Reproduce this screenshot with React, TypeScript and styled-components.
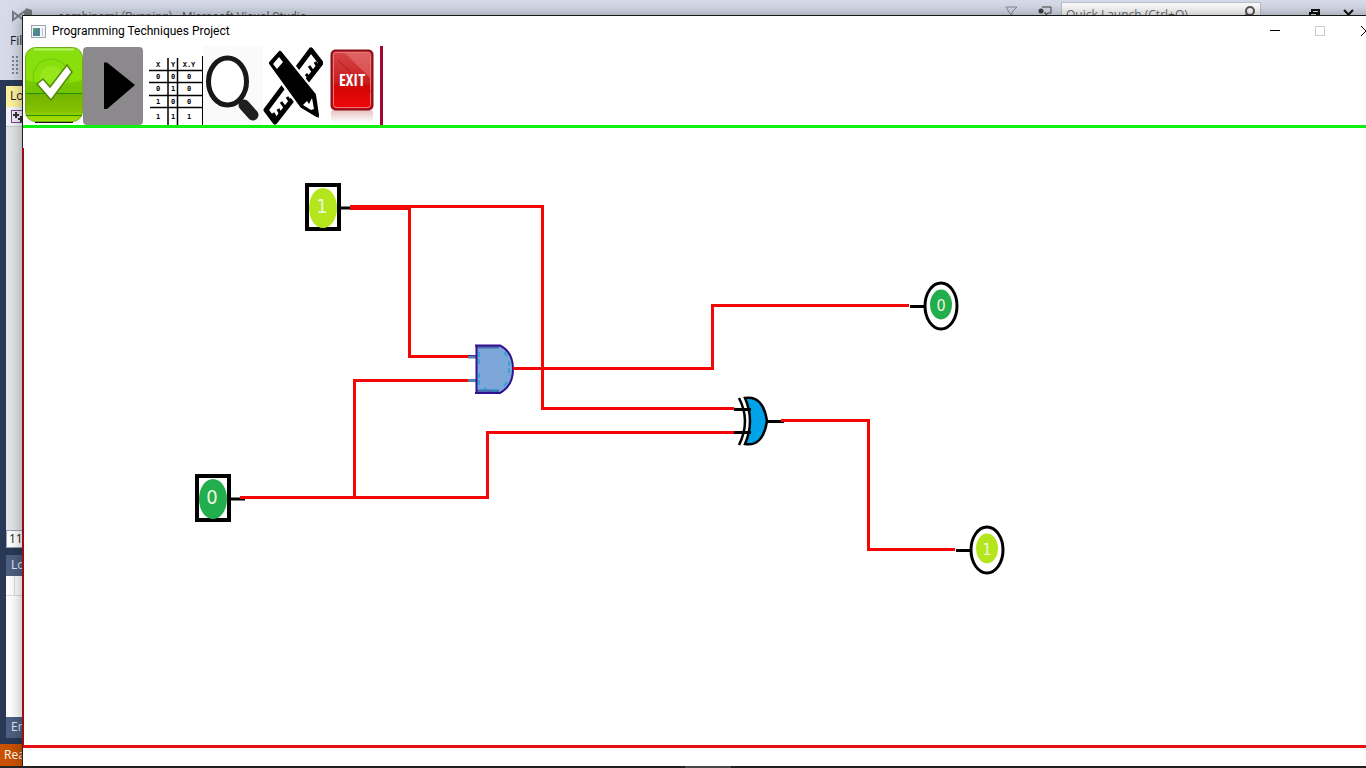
import React from "react";
import styled, { createGlobalStyle } from "styled-components";

const GlobalStyle = createGlobalStyle`
  * { box-sizing: border-box; }
  html, body, #root { height: 100%; }
  body {
    margin: 0;
    overflow: hidden;
    font-family: "Open Sans", "Noto Sans", sans-serif;
    font-size: 12px;
    line-height: 16px;
    color: #1e1e1e;
  }
  button { border: 0; padding: 0; background: none; font: inherit; color: inherit; }
  svg { display: block; }
`;

const Desktop = styled.div`
  position: relative;
  height: 100vh;
  overflow: hidden;
  display: flex;
  flex-direction: column;
  background: #293955;
`;

/* Editor behind the project window */

const IdeHeader = styled.header`
  height: 80px;
  flex: none;
  background: #d6dbe9;
`;

const IdeTitleBar = styled.div`
  height: 32px;
  display: flex;
  align-items: flex-start;
  padding: 0 12px;
`;

const IdeLogo = styled.div`
  width: 46px;
  padding-top: 8px;
`;

const IdeTitle = styled.span`
  flex: 1;
  padding-top: 9px;
  font-family: Roboto, sans-serif;
  color: #66696f;
`;

const IdeTools = styled.div`
  display: flex;
  align-items: flex-start;
`;

const ToolGlyph = styled.div<{ $width: number }>`
  width: ${(p) => p.$width}px;
  padding-top: 6px;
`;

const SearchBox = styled.label`
  display: flex;
  width: 200px;
  height: 24px;
  margin-top: 2px;
  margin-right: 48px;
  padding: 2px 4px;
  background: #fcfcfc;
  border: 1px solid #bcc0cb;
`;

const SearchInput = styled.input`
  flex: 1;
  min-width: 0;
  height: 18px;
  padding: 0;
  border: 0;
  background: none;
  font: inherit;
  &::placeholder { color: #6d6d6d; opacity: 1; }
`;

const IdeMenu = styled.nav`
  display: flex;
  padding: 1px 10px 0;
`;

const IdeGrip = styled.div`
  width: 6px;
  height: 18px;
  margin: 7px 12px;
  background-image: radial-gradient(circle at 1px 1px, #7e8492 1px, transparent 1px);
  background-size: 4px 4px;
`;

const IdeBody = styled.div`
  flex: 1;
  display: flex;
  flex-direction: column;
  padding: 6px 6px 0;
`;

const DocumentTab = styled.div`
  height: 21px;
  padding: 2px 4px;
  background: #fff29d;
`;

const DocumentBar = styled.div`
  height: 20px;
  padding: 3px 5px;
  background: #f3f4f8;
  border-bottom: 1px solid #c4c8d4;
`;

const DocumentBody = styled.div`
  flex: 1;
  background: #e3e4e8;
`;

const ZoomBar = styled.div`
  height: 18px;
  margin-bottom: 7px;
  padding: 0 2px;
  background: #fff;
  border: 1px solid #9aa3b8;
`;

const PanelHeader = styled.div`
  height: 21px;
  padding: 2px 5px;
  color: #e4e8f0;
  background: #4d6082;
`;

const PanelBody = styled.div`
  height: 141px;
  background: #fff;
`;

const PanelColumns = styled.div`
  height: 20px;
  border-bottom: 1px solid #dcdde3;
  background: linear-gradient(90deg, transparent 8px, #dcdde3 8px, #dcdde3 9px, transparent 9px);
`;

const StatusBar = styled.footer`
  height: 22px;
  flex: none;
  margin-top: 6px;
  padding: 3px 4px;
  color: #fff;
  background: #ca5100;
`;

const Taskbar = styled.div`
  height: 2px;
  flex: none;
  display: flex;
  justify-content: center;
  padding-right: 50px;
  padding-left: 100px;
  background: #262626;
`;

const TaskbarItem = styled.div`
  width: 46px;
  background: #555;
`;

/* Project window */

const Window = styled.main`
  position: absolute;
  inset: 15px -24px 2px 22px;
  display: flex;
  flex-direction: column;
  background: #fff;
  border-top: 1px solid #151515;
  border-left: 1px solid #222;
  box-shadow: 0 0 14px rgba(0, 0, 0, 0.35);
`;

const TitleBar = styled.header`
  height: 30px;
  flex: none;
  display: flex;
  align-items: center;
  gap: 6px;
  padding-left: 8px;
  color: #000;
`;

const WindowTitle = styled.h1`
  flex: 1;
  margin: 0;
  font-family: Roboto, sans-serif;
  font-size: 12px;
  font-weight: 400;
`;

const WindowControls = styled.div`
  display: flex;
`;

const WindowButton = styled.button<{ $wide?: boolean }>`
  width: ${(p) => (p.$wide ? 48 : 45)}px;
  height: 30px;
  display: grid;
  place-items: center;
`;

const Toolbar = styled.nav`
  height: 79px;
  flex: none;
  display: flex;
  width: 360px;
  border-right: 3px solid #a00830;
`;

const ToolButton = styled.button`
  flex: none;
  width: 60px;
  height: 79px;
  &:last-child { width: 57px; overflow: hidden; }
`;

const ToolbarRule = styled.div`
  height: 3px;
  flex: none;
  background: #10f010;
`;

const Canvas = styled.section`
  position: relative;
  flex: 1;
  background: #fff;
`;

const CanvasEdge = styled.div`
  position: absolute;
  top: 20px;
  bottom: 0;
  left: -1px;
  width: 2px;
  background: #9c0c10;
`;

const Wires = styled.svg`
  position: absolute;
  inset: 0;
  width: 100%;
  height: 100%;
`;

const Part = styled.div<{ $x: number; $y: number }>`
  position: absolute;
  left: ${(p) => p.$x}px;
  top: ${(p) => p.$y}px;
`;

const MessageArea = styled.div`
  height: 21px;
  flex: none;
  border-top: 3px solid #e61010;
`;

const digitFont = '"DejaVu Sans Condensed", "DejaVu Sans", sans-serif';

const CheckIcon = () => (
  <svg width="60" height="79" viewBox="0 0 60 79">
    <defs>
      <linearGradient id="checkFill" x1="0" y1="0" x2="0" y2="1">
        <stop offset="0" stopColor="#86df10" />
        <stop offset="0.44" stopColor="#8be008" />
        <stop offset="0.6" stopColor="#78bb00" />
        <stop offset="0.62" stopColor="#72b300" />
        <stop offset="0.85" stopColor="#83c000" />
        <stop offset="1" stopColor="#a9e400" />
      </linearGradient>
    </defs>
    <path d="M12 75.500H50" stroke="#111" strokeWidth="3" />
    <rect x="2.500" y="1.500" width="57" height="74" rx="10" fill="url(#checkFill)" stroke="#6faa1c" />
    <path d="M11 3.500H51" stroke="#b5f262" strokeWidth="2" />
    <path d="M3 34Q30 43 59 34V47H3Z" fill="#73c600" opacity=".8" />
    <circle cx="28" cy="31" r="18" fill="none" stroke="#64c912" />
    <circle cx="29" cy="32" r="12" fill="#a2ec2c" opacity=".55" />
    <path d="M3 47.500H59M3 69.500H59" stroke="#278d09" />
    <path d="M14 38L20 33L27 41L44 19L49 26L28 54Z" fill="#fff" stroke="#538b08" strokeWidth="1.500" />
  </svg>
);

const PlayIcon = () => (
  <svg width="60" height="79" viewBox="0 0 60 79">
    <rect x="0" y="1" width="60" height="78" rx="4" fill="#8b898b" />
    <path d="M21 16.500H24L52 39L24 63H21Z" fill="#000" />
  </svg>
);

const truthRows: string[][] = [
  ["X", "Y", "X.Y"],
  ["0", "0", "0"],
  ["0", "1", "0"],
  ["1", "0", "0"],
  ["1", "1", "1"],
];
const truthY = [21, 33, 45, 58, 73];

const TableIcon = () => (
  <svg width="60" height="79" viewBox="0 0 60 79">
    <path d="M6 24.500H60M6 36.500H60M6 49.500H60M7 61.500H60M25 12V79M34.500 12V79" stroke="#000" strokeWidth="1.500" />
    <path d="M59.500 10V79" stroke="#000" />
    <g fontFamily="DejaVu Sans Mono, monospace" fontWeight="700" fontSize="7" textAnchor="middle">
      {truthRows.map((row, r) =>
        row.map((value, c) => (
          <text key={`${r}-${c}`} x={[15, 30, 46][c]} y={truthY[r]}>{value}</text>
        ))
      )}
    </g>
  </svg>
);

const MagnifierIcon = () => (
  <svg width="60" height="79" viewBox="0 0 60 79">
    <rect x="0" y="0" width="60" height="79" fill="#fafafa" />
    <ellipse cx="24.500" cy="35.500" rx="19" ry="23.500" fill="#fff" stroke="#181818" strokeWidth="5" />
    <path d="M36 53L40 58" stroke="#181818" strokeWidth="5" />
    <path d="M41 59L50 69" stroke="#202020" strokeWidth="11" strokeLinecap="round" />
  </svg>
);

const DesignIcon = () => (
  <svg width="60" height="79" viewBox="0 0 60 79">
    <path d="M48 4L58 17L12 76L3 64Z" fill="#fff" stroke="#000" strokeWidth="5" strokeLinejoin="round" />
    <path d="M14 74L10 67M18 69L15 63M23 63L18 56M28 57L24 51M43 38L38 31M47 33L43 28M51 27L46 20M55 21L52 16" stroke="#000" strokeWidth="3" />
    <path d="M4 17L17 2L53 48L58 75L38 63Z" fill="#000" stroke="#fff" strokeWidth="3" />
    <path d="M8 17L17 7L51 49L54 69L39 60Z" fill="#000" stroke="#000" strokeWidth="4" strokeLinejoin="round" />
    <path d="M10 18L16 11L20 16L14 23Z" fill="#fff" />
    <path d="M40 59L44 55L46 58L49 52L51 63L48 64Z" fill="#fff" />
  </svg>
);

const ExitIcon = () => (
  <svg width="57" height="79" viewBox="0 0 57 79">
    <defs>
      <linearGradient id="exitFill" x1="0" y1="0" x2="0" y2="1">
        <stop offset="0" stopColor="#d64848" />
        <stop offset="0.55" stopColor="#c81c1e" />
        <stop offset="0.6" stopColor="#d30606" />
        <stop offset="1" stopColor="#f00808" />
      </linearGradient>
      <linearGradient id="exitReflection" x1="0" y1="0" x2="0" y2="1">
        <stop offset="0" stopColor="#d89898" />
        <stop offset="1" stopColor="#fff" />
      </linearGradient>
    </defs>
    <rect x="8" y="64" width="42" height="13" rx="3" fill="url(#exitReflection)" opacity=".6" />
    <rect x="8.500" y="4.500" width="41" height="59" rx="4" fill="url(#exitFill)" stroke="#8c1018" strokeWidth="2" />
    <rect x="10.500" y="6.500" width="37" height="55" rx="3" fill="none" stroke="#ea7777" />
    <path d="M22 7L47 32V10Q47 7 44 7Z" fill="#ee9292" opacity=".4" />
    <path d="M15 14L48 46" stroke="#a40b12" opacity=".6" />
    <text x="29" y="40" fill="#fff" fontSize="16" fontWeight="700" fontFamily="Open Sans Condensed, DejaVu Sans Condensed, sans-serif" textAnchor="middle">EXIT</text>
  </svg>
);

const tools = [
  { name: "Validate", Icon: CheckIcon },
  { name: "Simulate", Icon: PlayIcon },
  { name: "Truth table", Icon: TableIcon },
  { name: "Probe", Icon: MagnifierIcon },
  { name: "Design mode", Icon: DesignIcon },
  { name: "Exit", Icon: ExitIcon },
];

const Switch = ({ x, y, value }: { x: number; y: number; value: 0 | 1 }) => (
  <Part $x={x} $y={y}>
    <svg width="52" height="48" viewBox="0 0 52 48">
      <path d="M34 25H50" stroke="#000" strokeWidth="3" />
      <rect x="2" y="2" width="32" height="44" fill="#fff" stroke="#000" strokeWidth="4" />
      <ellipse cx="18" cy="25" rx="14" ry="20" fill={value ? "#b5e61d" : "#22ae4c"} />
      <text x="17" y="30" fontFamily={digitFont} fontSize="20" fontWeight="200" fill="#e9f9dc" textAnchor="middle">{value}</text>
    </svg>
  </Part>
);

const Led = ({ x, y, value }: { x: number; y: number; value: 0 | 1 }) => (
  <Part $x={x} $y={y}>
    <svg width="50" height="50" viewBox="0 0 50 50">
      <path d="M0 25.500H14" stroke="#000" strokeWidth="3" />
      <ellipse cx="31" cy="25" rx="16" ry="23" fill="#fff" stroke="#000" strokeWidth="3" />
      <ellipse cx="31" cy="23.500" rx="11" ry="15" fill={value ? "#b5e61d" : "#22ae4c"} />
      <text x="31" y="30" fontFamily={digitFont} fontSize="16" fontWeight="200" fill="#e9f9dc" textAnchor="middle">{value}</text>
    </svg>
  </Part>
);

const AndGate = () => (
  <Part $x={445} $y={216}>
    <svg width="50" height="50" viewBox="0 0 50 50">
      <path d="M0 13H9M0 36.500H9" stroke="#5a7fae" strokeWidth="3" />
      <path d="M0 11.500H9" stroke="#40309a" />
      <path d="M8.500 1.500H32Q45 8 45 25Q45 42 32 49H8.500Z" fill="#7da7d9" />
      <path d="M9 3H31M9 47H31" stroke="#4a6bab" strokeWidth="3" />
      <path d="M8.500 1V49.500M7 1.500H32Q45 8 45 25Q45 42 32 49H7" fill="none" stroke="#33108f" strokeWidth="2" />
      <path d="M11 8V22M11 29V43M36 8L39 12M41 17V31M36 42L39 38M14 46L19 44M24 46H30" fill="none" stroke="#1aa6d2" strokeWidth="1.500" strokeDasharray="5 2" />
    </svg>
  </Part>
);

const XorGate = () => (
  <Part $x={711} $y={267}>
    <svg width="50" height="52" viewBox="0 0 50 52">
      <path d="M11 3Q29 0 33 26Q29 52 11 49Q21 26 11 3Z" fill="#00a2e8" stroke="#000" strokeWidth="2.500" />
      <path d="M5 3Q17 26 5 50" fill="none" stroke="#000" strokeWidth="2.500" />
      <path d="M0 14.500H17M0 37.500H17M33 26.500H50" stroke="#000" strokeWidth="3" />
    </svg>
  </Part>
);

/* Wire routes, relative to the canvas */
const wires = [
  "M327 78.500H519.500V280.500H711",
  "M327 80.500H386.500V228.500H445",
  "M217 369.500H331.500V252.500H445",
  "M217 369.500H464.500V304.500H711",
  "M490 240.500H689.500V177.500H886",
  "M758 292.500H845.500V421.500H932",
];

export default function App() {
  return (
    <Desktop>
      <GlobalStyle />
      <IdeHeader>
        <IdeTitleBar>
          <IdeLogo>
            <svg width="20" height="16" viewBox="0 0 20 16">
              <path d="M1 4L13 13V3L1 12Z" fill="none" stroke="#777b84" strokeWidth="2" />
              <path d="M14 0L20 2V14L14 16Z" fill="#777b84" />
            </svg>
          </IdeLogo>
          <IdeTitle>combinami (Running) - Microsoft Visual Studio</IdeTitle>
          <IdeTools>
            <ToolGlyph $width={33}>
              <svg width="13" height="12" viewBox="0 0 13 12"><path d="M1 1H12L7 6V11L1 1Z" fill="none" stroke="#868a94" /></svg>
            </ToolGlyph>
            <ToolGlyph $width={23}>
              <svg width="14" height="12" viewBox="0 0 14 12">
                <circle cx="3" cy="5" r="2.500" fill="#424242" />
                <path d="M4 1H13V7H10L8 9V7H6" fill="none" stroke="#424242" />
              </svg>
            </ToolGlyph>
            <SearchBox>
              <SearchInput aria-label="Quick Launch" placeholder="Quick Launch (Ctrl+Q)" />
              <svg width="14" height="14" viewBox="0 0 14 14">
                <circle cx="8" cy="6" r="4" fill="none" stroke="#555" strokeWidth="2" />
                <path d="M5 9L1 13" stroke="#555" strokeWidth="2" />
              </svg>
            </SearchBox>
            <ToolGlyph $width={34}>
              <svg width="12" height="14" viewBox="0 0 12 14"><path d="M3 7V4H10V10H8M1 7H8V13H1Z" fill="none" stroke="#111" strokeWidth="2" /></svg>
            </ToolGlyph>
            <ToolGlyph $width={11}>
              <svg width="11" height="14" viewBox="0 0 11 14"><path d="M1 4L10 13M10 4L1 13" stroke="#111" strokeWidth="2" /></svg>
            </ToolGlyph>
          </IdeTools>
        </IdeTitleBar>
        <IdeMenu>File</IdeMenu>
        <IdeGrip />
      </IdeHeader>
      <IdeBody>
        <DocumentTab>Logic</DocumentTab>
        <DocumentBar>
          <svg width="16" height="14" viewBox="0 0 16 14">
            <rect x=".500" y=".500" width="15" height="12" fill="#f4ecf8" stroke="#74458c" />
            <path d="M2 5H8M5 2V8M7 9H13M10 6V12" stroke="#333" strokeWidth="2" />
          </svg>
        </DocumentBar>
        <DocumentBody />
        <ZoomBar>110</ZoomBar>
        <PanelHeader>Locals</PanelHeader>
        <PanelBody><PanelColumns /></PanelBody>
        <PanelHeader>Error</PanelHeader>
      </IdeBody>
      <StatusBar>Ready</StatusBar>
      <Taskbar><TaskbarItem /></Taskbar>

      <Window>
        <TitleBar>
          <svg width="15" height="13" viewBox="0 0 15 13">
            <rect x=".500" y=".500" width="14" height="12" fill="#f4f6f7" stroke="#9ba4ab" />
            <rect x="2" y="3" width="7" height="8" fill="#4c8795" />
            <path d="M2 11V7L6 3H2Z" fill="#52a375" />
            <path d="M11.500 3V11" stroke="#bac2c8" />
          </svg>
          <WindowTitle>Programming Techniques Project</WindowTitle>
          <WindowControls>
            <WindowButton aria-label="Minimize">
              <svg width="10" height="10" viewBox="0 0 10 10"><path d="M0 4.500H10" stroke="#000" /></svg>
            </WindowButton>
            <WindowButton aria-label="Maximize" disabled>
              <svg width="10" height="10" viewBox="0 0 10 10"><rect x=".500" y=".500" width="9" height="9" fill="none" stroke="#ccc" /></svg>
            </WindowButton>
            <WindowButton aria-label="Close" $wide>
              <svg width="10" height="10" viewBox="0 0 10 10"><path d="M0 0L10 10M10 0L0 10" stroke="#000" /></svg>
            </WindowButton>
          </WindowControls>
        </TitleBar>
        <Toolbar>
          {tools.map(({ name, Icon }) => (
            <ToolButton key={name} aria-label={name}><Icon /></ToolButton>
          ))}
        </Toolbar>
        <ToolbarRule />
        <Canvas>
          <CanvasEdge />
          <Switch x={282} y={55} value={1} />
          <Switch x={172} y={346} value={0} />
          <AndGate />
          <XorGate />
          <Led x={887} y={153} value={0} />
          <Led x={933} y={397} value={1} />
          <Wires>
            {wires.map((d) => (
              <path key={d} d={d} fill="none" stroke="#f20606" strokeWidth="3" />
            ))}
          </Wires>
        </Canvas>
        <MessageArea />
      </Window>
    </Desktop>
  );
}
